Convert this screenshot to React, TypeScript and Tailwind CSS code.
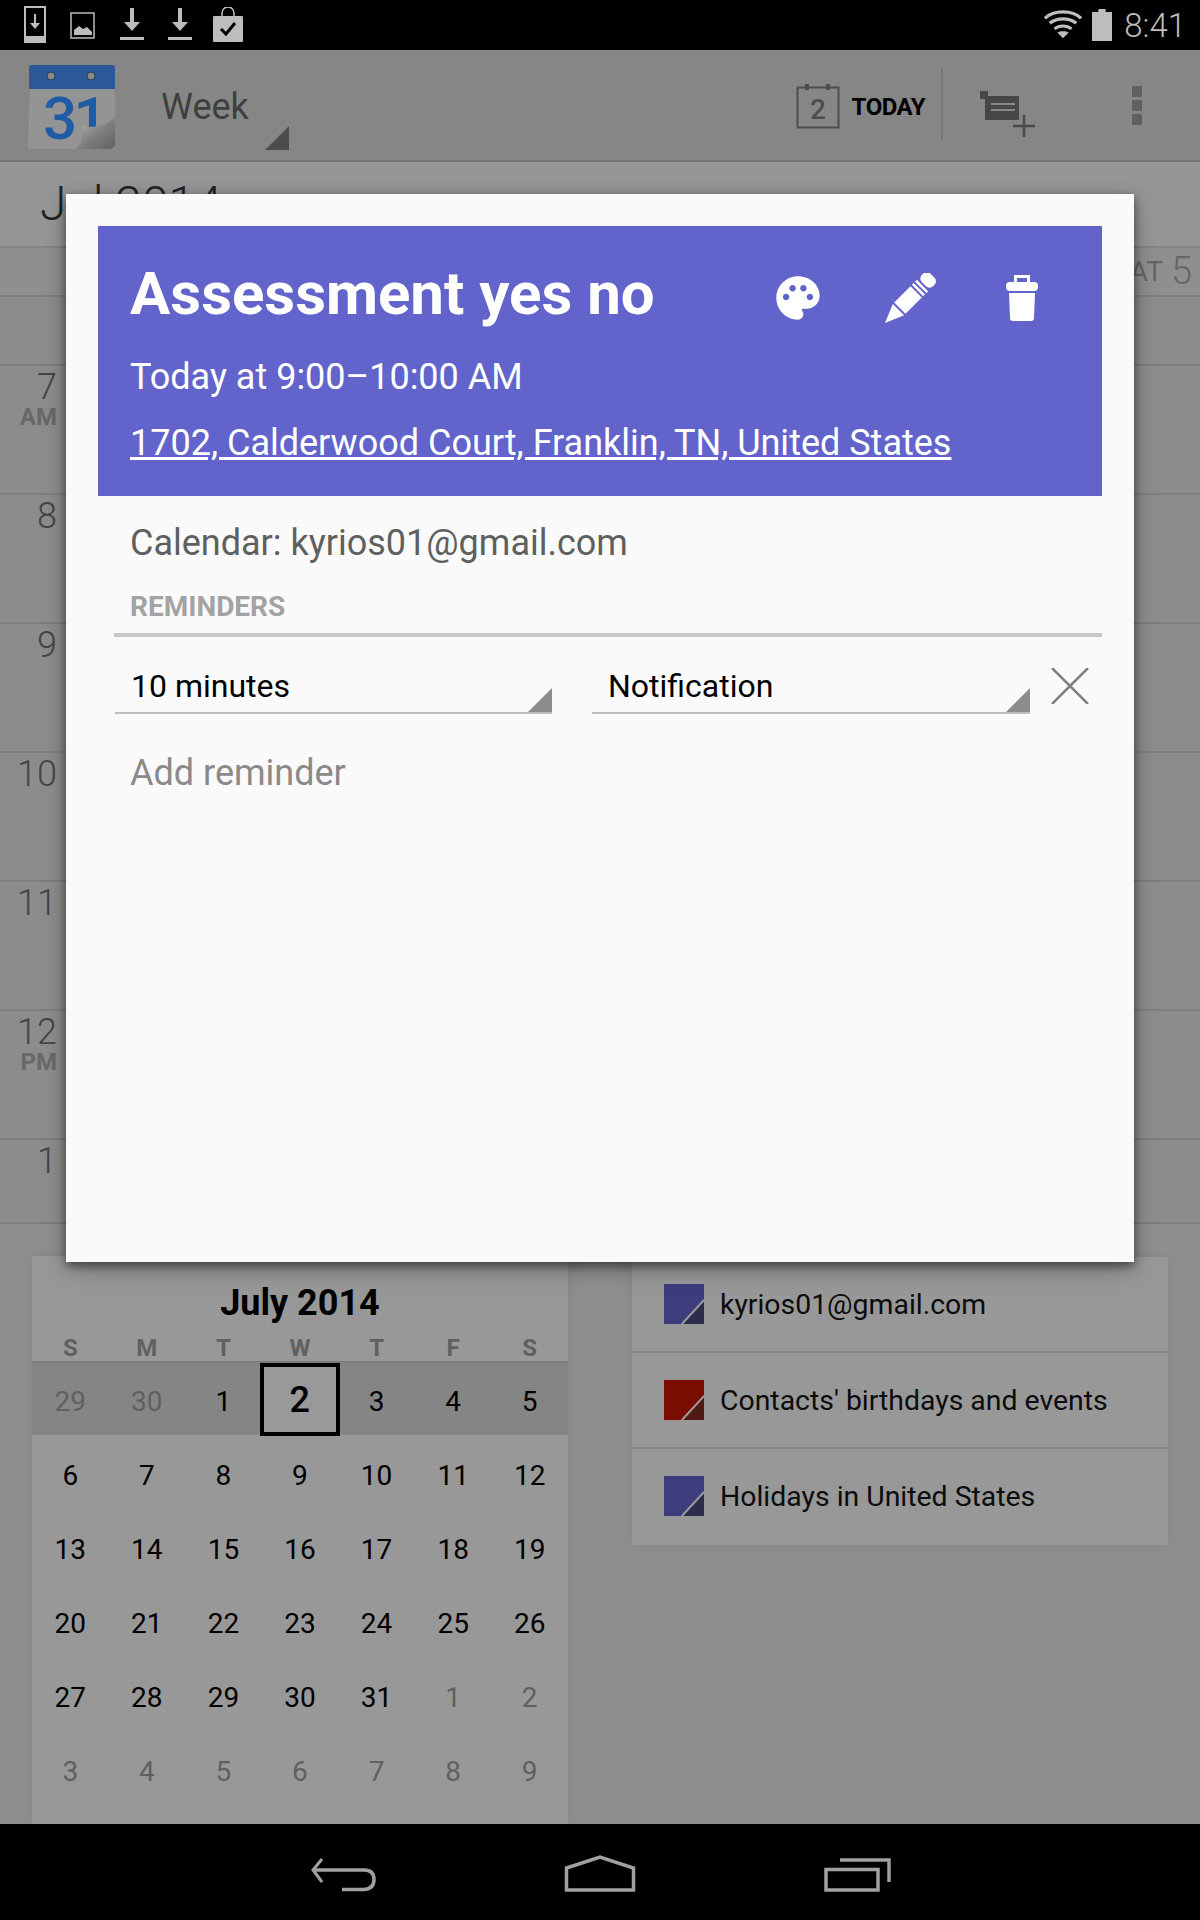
import { MdPalette } from "react-icons/md";

const hours = [
  { h: "", sub: "" },
  { h: "7", sub: "AM" },
  { h: "8", sub: "" },
  { h: "9", sub: "" },
  { h: "10", sub: "" },
  { h: "11", sub: "" },
  { h: "12", sub: "PM" },
  { h: "1", sub: "" },
];

const weeks = [
  ["29", "30", "1", "2", "3", "4", "5"],
  ["6", "7", "8", "9", "10", "11", "12"],
  ["13", "14", "15", "16", "17", "18", "19"],
  ["20", "21", "22", "23", "24", "25", "26"],
  ["27", "28", "29", "30", "31", "1", "2"],
  ["3", "4", "5", "6", "7", "8", "9"],
];

const calendars = [
  { name: "kyrios01@gmail.com", main: "#3d3d7e", corner: "#2c2c4c" },
  { name: "Contacts' birthdays and events", main: "#7b0d00", corner: "#4f1a12" },
  { name: "Holidays in United States", main: "#3d3d7e", corner: "#2c2c4c" },
];

const isMuted = (w: number, d: number) => (w === 0 && d < 2) || (w === 4 && d > 4) || w === 5;

const DownloadIcon = () => (
  <svg width="24" height="34" viewBox="0 0 24 34" fill="#bdbdbd">
    <path d="M10 0h4v14h6l-8 9-8-9h6z" />
    <rect x="0" y="29" width="24" height="3" />
  </svg>
);

const Arrow = ({ color, size }: { color: string; size: number }) => (
  <svg width={size} height={size} viewBox="0 0 10 10" className="absolute right-0 bottom-0">
    <path d="M10 0v10H0z" fill={color} />
  </svg>
);

export default function App() {
  return (
    <div className="relative w-[1200px] h-[1920px] overflow-hidden flex flex-col bg-[#8f8f8f] font-['Roboto',sans-serif]">
      {/* status bar */}
      <div className="h-[50px] bg-black flex items-center justify-between shrink-0">
        <div className="flex items-center">
          <svg width="24" height="38" viewBox="0 0 24 38" className="ml-[24px]">
            <rect x="1" y="1" width="20" height="35" fill="none" stroke="#bdbdbd" strokeWidth="2" />
            <rect x="1" y="30" width="21" height="7" fill="#bdbdbd" />
            <path d="M10 8h2v12h-2z M6 17h10l-5 6z" fill="#bdbdbd" />
          </svg>
          <svg width="26" height="27" viewBox="0 0 26 27" className="ml-[22px]">
            <rect x="1" y="1" width="23" height="25" fill="none" stroke="#bdbdbd" strokeWidth="1.5" />
            <path d="M4 23v-5l5-4 4 3 4-2 5 5v3z" fill="#bdbdbd" />
          </svg>
          <div className="ml-[24px]">
            <DownloadIcon />
          </div>
          <div className="ml-[24px]">
            <DownloadIcon />
          </div>
          <svg width="32" height="36" viewBox="0 0 32 36" className="ml-[20px]">
            <path d="M10 9V6a6 6 0 0 1 12 0v3" fill="none" stroke="#bdbdbd" strokeWidth="1.5" />
            <rect x="1" y="9" width="30" height="26" rx="1" fill="#bdbdbd" />
            <path d="M9 22l5 5 9-11" fill="none" stroke="#000" strokeWidth="3" />
          </svg>
        </div>
        <div className="flex items-center mr-[14px]">
          <svg width="38" height="30" viewBox="0 0 40 30" fill="none" stroke="#bdbdbd">
            <path d="M1 8C10-1 30-1 39 8" strokeWidth="3.500" />
            <path d="M6 13c8-6 20-6 28 0" strokeWidth="3.500" />
            <path d="M11 19c5-4 13-4 18 0" strokeWidth="3" />
            <path d="M14 23c3-2 9-2 12 0l-6 6z" fill="#bdbdbd" stroke="none" />
          </svg>
          <svg width="20" height="32" viewBox="0 0 22 32" className="ml-[10px]" preserveAspectRatio="none">
            <path d="M7 0h8v3h7v29H0V3h7z" fill="#bdbdbd" />
          </svg>
          <span className="ml-[12px] text-[33px] font-light text-[#bdbdbd] leading-none">8:41</span>
        </div>
      </div>

      {/* action bar */}
      <div className="h-[112px] bg-[#868686] border-b-2 border-[#747474] flex items-center shrink-0">
        <svg width="92" height="88" viewBox="0 0 92 88" className="ml-[26px] mt-[6px] shrink-0">
          <defs>
            <linearGradient id="curl" x1="0.2" y1="0.1" x2="0.9" y2="0.9">
              <stop offset="0" stopColor="#a8a8a8" />
              <stop offset="0.55" stopColor="#7d7d7d" />
              <stop offset="1" stopColor="#686868" />
            </linearGradient>
          </defs>
          <path d="M4 20h85v62l-1 3H5l-3-1z" fill="#949494" />
          <path d="M3 3q0-2 2-2h82q2 0 2 2v22H3z" fill="#2b5896" />
          <circle cx="25" cy="12" r="4" fill="#8a8a8a" stroke="#2a3f5c" />
          <circle cx="65" cy="12" r="4" fill="#8a8a8a" stroke="#2a3f5c" />
          <text x="17" y="75" fontFamily="Roboto" fontWeight="500" fontSize="60" fill="#1f5ca5" letterSpacing="-3.5">
            31
          </text>
          <path d="M89 52Q78 66 56 62Q58 78 50 85H86l3-3z" fill="url(#curl)" />
        </svg>
        <div className="relative w-[128px] h-[70px] ml-[43px] mt-[20px] shrink-0">
          <span className="absolute left-0 top-[6px] text-[36px] leading-[42px] text-[#3f3f3f]">Week</span>
          <Arrow color="#4d4d4d" size={24} />
        </div>
        <div className="ml-auto flex items-center h-[72px]">
          <svg width="44" height="46" viewBox="0 0 44 46" fill="none" stroke="#4d4d4d" strokeWidth="2" className="mt-[2px]">
            <rect x="1.500" y="4.500" width="41" height="40" />
            <rect x="9" y="1" width="4" height="6" fill="#4d4d4d" stroke="none" />
            <rect x="30" y="1" width="4" height="6" fill="#4d4d4d" stroke="none" />
            <text x="22" y="36" textAnchor="middle" fontFamily="Roboto" fontWeight="500" fontSize="28" fill="#4d4d4d" stroke="none">
              2
            </text>
          </svg>
          <span className="ml-[12px] mt-[4px] text-[24px] font-bold text-black tracking-[-0.5px]">TODAY</span>
          <div className="w-[2px] h-full bg-[#777777] ml-[16px]" />
          <svg width="58" height="48" viewBox="0 0 58 48" className="ml-[37px] mt-[20px]">
            <path d="M0 0h8v5h31v24H5V8H0z" fill="#474747" />
            <path d="M11 13h24M11 19h24" stroke="#888" strokeWidth="2" />
            <path d="M44 24v22M33 35h22" stroke="#4a4a4a" strokeWidth="2.500" />
          </svg>
          <div className="ml-[94px] mr-[58px] flex flex-col gap-[3px]">
            <div className="w-[10px] h-[11px] bg-[#606060]" />
            <div className="w-[10px] h-[11px] bg-[#606060]" />
            <div className="w-[10px] h-[11px] bg-[#606060]" />
          </div>
        </div>
      </div>

      {/* month */}
      <div className="h-[86px] bg-[#969696] border-b-2 border-[#838383] pl-[40px] flex items-center shrink-0">
        <span className="text-[48px] font-light text-[#222222] leading-none">Jul 2014</span>
      </div>
      <div className="h-[49px] bg-[#8f8f8f] border-b-2 border-[#7e7e7e] flex justify-end items-center pr-[8px] shrink-0 text-[#666666]">
        <span className="text-[28px] mr-[8px]">SAT</span>
        <span className="text-[38px] font-light">5</span>
      </div>

      {/* hours */}
      <div className="flex flex-col h-[927px] shrink-0 overflow-hidden bg-[#8c8c8c]">
        {hours.map((row, i) => (
          <div
            key={i}
            className={`${i === 0 ? "h-[69px]" : i === 7 ? "h-[84px]" : "h-[129px]"} shrink-0 border-b-2 border-[#7e7e7e] flex flex-col items-end w-full pr-[1143px]`}
          >
            {row.h && <span className="text-[36px] leading-[35px] font-light text-[#444444] mt-[4px]">{row.h}</span>}
            {row.sub && <span className="text-[24px] leading-[24px] font-bold text-[#686868]">{row.sub}</span>}
          </div>
        ))}
      </div>

      {/* bottom */}
      <div className="flex-1 bg-[#8f8f8f] flex gap-[64px] px-[32px] pt-[32px] items-start">
        <div className="w-[536px] h-[568px] bg-[#989898] shadow-[0_0_12px_rgba(0,0,0,0.08)] flex flex-col">
          <div className="h-[68px] pt-[26px] text-center text-[36px] leading-[42px] font-bold text-black">July 2014</div>
          <div className="grid grid-cols-7 h-[31px] mt-[6px] items-center text-center text-[24px] font-bold text-[#606060]">
            {["S", "M", "T", "W", "T", "F", "S"].map((d, i) => (
              <span key={i}>{d}</span>
            ))}
          </div>
          <div className="h-[2px] bg-[#7c7c7c] shrink-0" />
          {weeks.map((week, w) => (
            <div
              key={w}
              className={`grid grid-cols-7 shrink-0 items-center text-center text-[28px] ${w === 0 ? "h-[72px] mb-[3px] bg-[#858585]" : "h-[74px] pt-[2px]"}`}
            >
              {week.map((d, i) =>
                w === 0 && i === 3 ? (
                  <span
                    key={i}
                    className="h-[73px] w-[80px] -ml-[2px] border-[4px] border-black bg-[#999999] text-[36px] font-medium text-black flex items-center justify-center"
                  >
                    {d}
                  </span>
                ) : (
                  <span key={i} className={`${isMuted(w, i) ? "text-[#606060]" : "text-black"} ${w === 0 ? "mt-[5px]" : ""}`}>
                    {d}
                  </span>
                ),
              )}
            </div>
          ))}
        </div>
        <div className="w-[536px] mt-[1px] bg-[#989898] shadow-[0_0_12px_rgba(0,0,0,0.08)] flex flex-col">
          {calendars.map((c, i) => (
            <div
              key={c.name}
              className={`h-[96px] flex items-center pl-[32px] ${i < 2 ? "border-b-2 border-[#868686]" : "pb-[2px]"}`}
            >
              <svg width="40" height="40" viewBox="0 0 40 40" className="shrink-0">
                <rect width="40" height="40" fill={c.main} />
                <path d="M40 16V40H18z" fill={c.corner} />
                <path d="M40 16L18 40" stroke="#9a9a9a" strokeWidth="2" />
              </svg>
              <span className="ml-[16px] mt-[2px] text-[28.4px] text-[#0c0c0c]">{c.name}</span>
            </div>
          ))}
        </div>
      </div>

      {/* nav bar */}
      <div className="h-[96px] bg-black shrink-0 flex items-center justify-center relative">
        <svg width="68" height="34" viewBox="0 0 68 34" fill="none" stroke="#a0a0a0" strokeWidth="3.500" className="absolute left-[310px] top-[34px]">
          <path d="M12 1L3 12l9 12" strokeWidth="3" />
          <path d="M3 12h51q10 0 10 9.500t-10 10H32" />
        </svg>
        <svg width="72" height="37" viewBox="0 0 72 37" fill="none" stroke="#a0a0a0" strokeWidth="3.500" className="absolute left-[564px] top-[31px]">
          <path d="M2.500 13L36 2l33.500 11v22H2.500z" />
        </svg>
        <svg width="68" height="34" viewBox="0 0 68 34" fill="none" stroke="#a0a0a0" strokeWidth="3.500" className="absolute left-[824px] top-[34px]">
          <rect x="2" y="11.500" width="52" height="20.500" />
          <path d="M16 2h49v22" />
        </svg>
      </div>

      {/* dialog */}
      <div className="absolute left-[66px] top-[194px] w-[1068px] h-[1068px] bg-[#fafafa] shadow-[0_4px_10px_rgba(0,0,0,0.5),0_8px_24px_rgba(0,0,0,0.2)] p-[32px] pb-0 flex flex-col">
        <div className="h-[270px] bg-[#6364cb] pl-[32px] pr-[32px] shrink-0 text-white relative">
          <div className="text-[60px] leading-[70px] font-bold mt-[33px]">Assessment yes no</div>
          <div className="text-[36px] leading-[44px] mt-[26px]">Today at 9:00–10:00 AM</div>
          <div className="text-[36px] leading-[44px] mt-[22px] underline">1702, Calderwood Court, Franklin, TN, United States</div>
          <div className="absolute top-[46px] left-[674px] flex items-start">
            <MdPalette size={52} color="#ffffff" />
            <svg width="52" height="52" viewBox="0 0 52 52" fill="#ffffff" className="ml-[61px] mt-[1px]">
              <g transform="translate(0 50) rotate(-45)">
                <path d="M0 0L19-8V8z" />
                <rect x="21" y="-8" width="23" height="16" />
                <rect x="46" y="-8" width="2.500" height="16" />
                <rect x="50.500" y="-8" width="2.500" height="16" />
                <rect x="55" y="-8" width="12" height="16" rx="5" />
              </g>
            </svg>
            <svg width="32" height="46" viewBox="0 0 32 46" fill="#ffffff" className="ml-[69px] mt-[3px]">
              <path d="M8 8V0h16v8h-3V3H11v5z" />
              <rect x="0" y="7" width="32" height="9" rx="4" />
              <path d="M3 18h26l-1 25q0 3-3 3H7q-3 0-3-3z" />
            </svg>
          </div>
        </div>
        <div className="pl-[32px] mt-[25px] text-[36px] leading-[44px] text-[#5f5f5f]">Calendar: kyrios01@gmail.com</div>
        <div className="pl-[32px] mt-[26px] text-[28px] leading-[32px] font-bold text-[#a3a3a3]">REMINDERS</div>
        <div className="ml-[16px] mt-[10px] h-[4px] bg-[#c8c8c8]" />
        <div className="ml-[17px] mt-[27px] flex items-start">
          <div className="relative w-[437px] h-[50px] border-b-2 border-[#bdbdbd] pl-[16px] text-[32px] leading-[44px] text-black">
            10 minutes
            <Arrow color="#8c8c8c" size={24} />
          </div>
          <div className="relative w-[438px] h-[50px] ml-[40px] border-b-2 border-[#bdbdbd] pl-[16px] text-[32px] leading-[44px] text-black">
            Notification
            <Arrow color="#8c8c8c" size={24} />
          </div>
          <svg width="38" height="36" viewBox="0 0 38 36" fill="none" stroke="#7f7f7f" strokeWidth="2.500" className="ml-[21px] mt-[4px]">
            <path d="M1 0l36 36M37 0L1 36" />
          </svg>
        </div>
        <div className="pl-[32px] mt-[37px] text-[36px] leading-[44px] text-[#8a8a8a]">Add reminder</div>
      </div>
    </div>
  );
}
